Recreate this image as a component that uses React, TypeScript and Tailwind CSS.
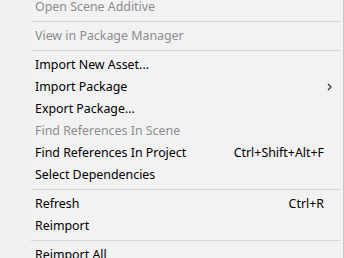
import React from "react";

type Item =
  | { kind: "sep" }
  | { kind: "item"; label: string; shortcut?: string; disabled?: boolean; submenu?: boolean };

const items: Item[] = [
  { kind: "item", label: "Open Scene Additive", disabled: true },
  { kind: "sep" },
  { kind: "item", label: "View in Package Manager", disabled: true },
  { kind: "sep" },
  { kind: "item", label: "Import New Asset..." },
  { kind: "item", label: "Import Package", submenu: true },
  { kind: "item", label: "Export Package..." },
  { kind: "item", label: "Find References In Scene", disabled: true },
  { kind: "item", label: "Find References In Project", shortcut: "Ctrl+Shift+Alt+F" },
  { kind: "item", label: "Select Dependencies" },
  { kind: "sep" },
  { kind: "item", label: "Refresh", shortcut: "Ctrl+R" },
  { kind: "item", label: "Reimport" },
  { kind: "sep" },
  { kind: "item", label: "Reimport All" },
];

export default function App() {
  return (
    <div className="w-[344px] h-[258px] overflow-hidden bg-[#f2f2f2]">
      <div
        className="-mt-[4px] w-[344px] border-r border-[#c4c4c4] bg-[linear-gradient(to_right,#f0f0f0_31px,#f2f2f2_31px)] text-[12.4px] font-['Noto_Sans','Noto_Sans_CJK_SC',sans-serif]"
      >
        {items.map((it, i) =>
          it.kind === "sep" ? (
            <div key={i} className="h-[7px] flex items-center">
              <div className="ml-[31px] mr-[2px] h-px flex-1 bg-[#d7d7d7]" />
            </div>
          ) : (
            <div
              key={i}
              className={`h-[22px] flex items-center pl-[35px] pr-[19px] ${
                it.disabled ? "text-[#8d8d8d]" : "text-black"
              }`}
            >
              <span className="flex-1 whitespace-nowrap">{it.label}</span>
              {it.shortcut && <span className="whitespace-nowrap">{it.shortcut}</span>}
              {it.submenu && (
                <svg width="6" height="8" viewBox="0 0 6 8" className="mr-[-9px]">
                  <path d="M1 1 L4 4 L1 7" fill="none" stroke="#333" strokeWidth="1.2" />
                </svg>
              )}
            </div>
          )
        )}
      </div>
    </div>
  );
}
